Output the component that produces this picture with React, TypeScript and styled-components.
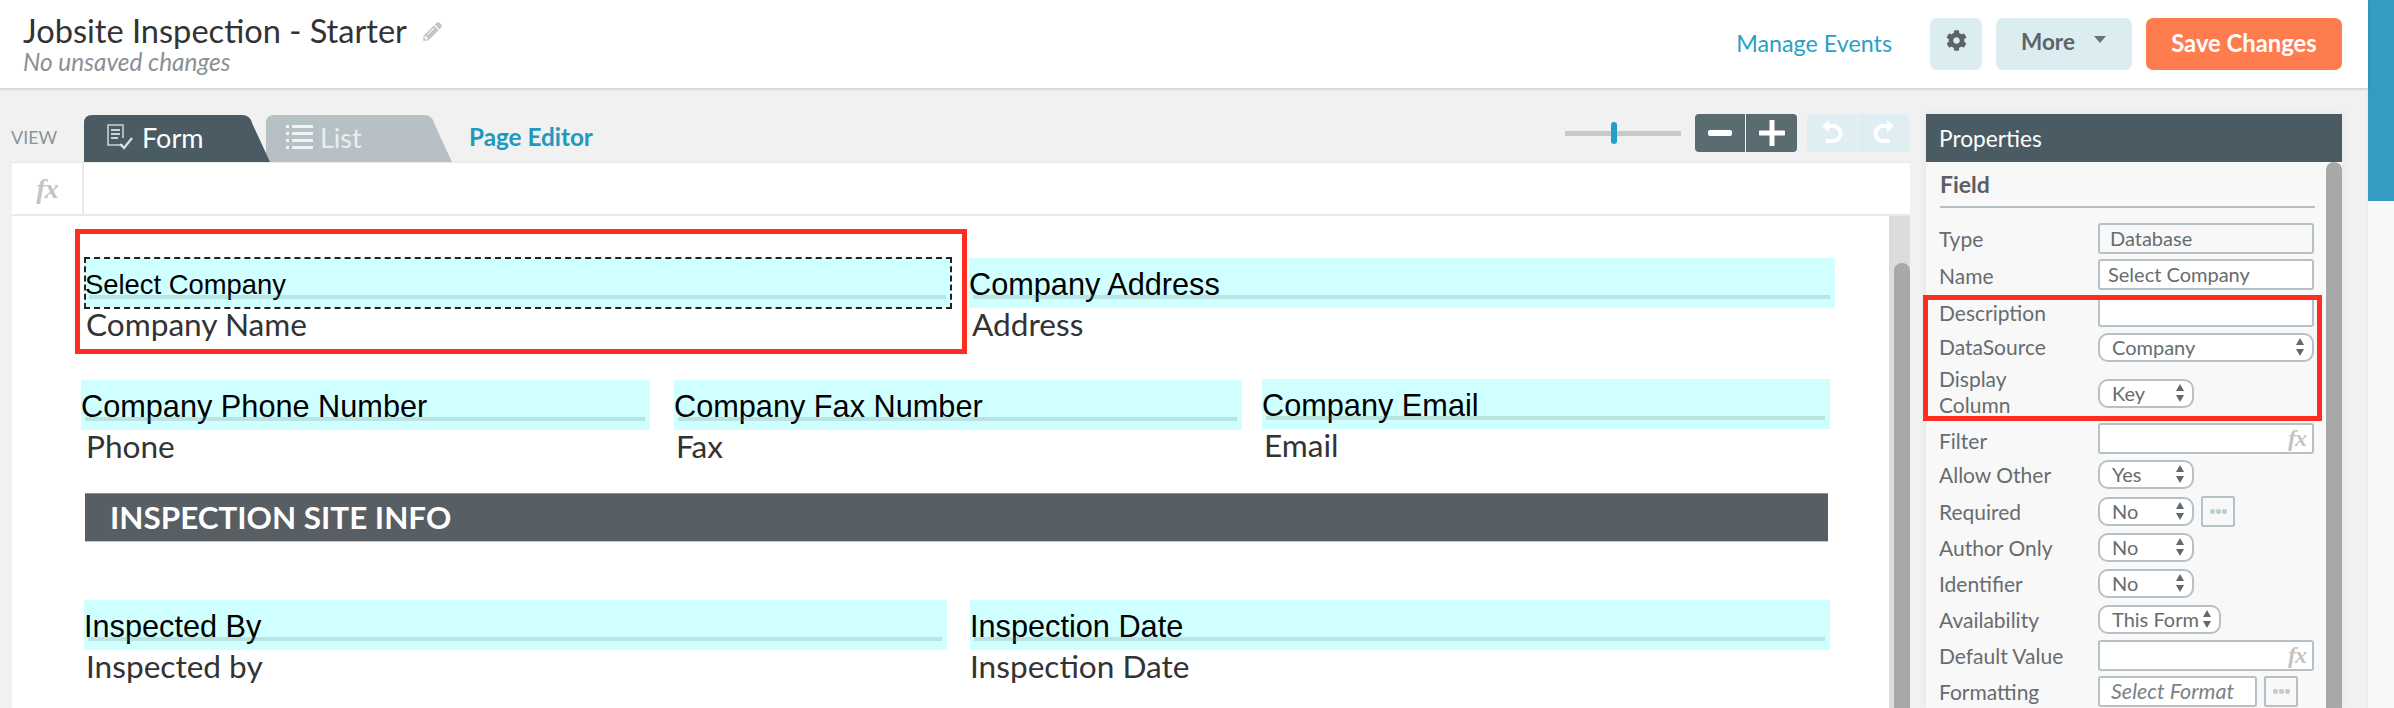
import React from "react";
import styled, { createGlobalStyle } from "styled-components";
import { FaCog, FaPencilAlt } from "react-icons/fa";

const GlobalStyle = createGlobalStyle`
  html, body { margin: 0; padding: 0; background: #f1f1f1; }
  * { box-sizing: border-box; }
`;
const sans = `"Lato", "Liberation Sans", sans-serif`;

const Page = styled.div`
  width: 2394px; height: 708px; overflow: hidden; display: flex; background: #f1f1f1;
  font-family: ${sans}; position: relative;
`;
const Main = styled.div`width: 2368px; display: flex; flex-direction: column; height: 708px;`;
const SideStrip = styled.div`
  width: 26px; height: 708px; background: #f8f8f8; box-shadow: -1px 0 2px rgba(0,0,0,.04);
`;
const StripFill = styled.div`height: 201px; background: #349cc0;`;

const TopBar = styled.header`
  height: 88px; flex: none; background: #fff; box-shadow: 0 1px 3px rgba(0,0,0,.18); display: flex;
  align-items: flex-start; padding: 18px 26px 0 23px; position: relative; z-index: 2;
`;
const TitleBlock = styled.div`display: flex; flex-direction: column; margin-top: -4px;`;
const TitleLine = styled.div`display: flex; align-items: center; gap: 16px; height: 34px;`;
const Title = styled.h1`margin: 0; font-size: 32.6px; font-weight: 400; color: #333; line-height: 34px; white-space: nowrap;`;
const PencilIcon = styled(FaPencilAlt)`color: #c2c6c8; font-size: 19px;`;
const Subtitle = styled.div`font-size: 24.4px; font-style: italic; color: #899196; line-height: 26px; margin-top: 1px; white-space: nowrap;`;
const TopActions = styled.div`margin-left: auto; display: flex; align-items: flex-start;`;
const EventsLink = styled.a`font-size: 23.3px; color: #2aa0c5; line-height: 50px; margin-right: 38px; white-space: nowrap;`;
const GearButton = styled.button`
  width: 52px; height: 52px; border: 0; border-radius: 7px; background: #dcedf2; color: #5c6468;
  font-size: 21px; display: flex; align-items: flex-start; justify-content: center; padding: 12px 0 0; margin-right: 14px;
`;
const MoreButton = styled.button`
  width: 136px; height: 52px; border: 0; border-radius: 7px; background: #dcedf2; color: #5c6468; font: 700 22.5px ${sans};
  display: flex; align-items: center; gap: 19px; padding: 0 0 6px 25px; margin-right: 14px;
`;
const Caret = styled.span`width: 0; height: 0; border: 6px solid transparent; border-top: 7px solid #6a7276; border-bottom: 0; margin-bottom: 3px;`;
const SaveButton = styled.button`
  width: 196px; height: 52px; border: 0; border-radius: 7px; background: #ff7c4f; color: #fff; font: 700 23.8px ${sans}; white-space: nowrap; padding: 0 0 2px;
`;

const Workspace = styled.div`flex: 1; min-height: 0; display: flex; padding: 26px 0 0 12px;`;
const EditorColumn = styled.div`width: 1898px; display: flex; flex-direction: column; min-height: 0;`;
const Toolbar = styled.div`height: 48px; flex: none; display: flex; align-items: flex-start; padding-right: 1px;`;
const ViewLabel = styled.span`width: 73px; margin-left: -1px; font-size: 18px; color: #8b9498; line-height: 46px; flex: none;`;
const TabShape = styled.div<{ $active?: boolean }>`
  width: 186px; height: 48px; flex: none; display: flex; align-items: center; padding-bottom: 2px;
  background: ${(p) => (p.$active ? "#4a5b64" : "#b7c0c5")};
  color: ${(p) => (p.$active ? "#fff" : "#e9eef0")};
  margin-left: ${(p) => (p.$active ? 0 : "-4px")};
  padding-left: ${(p) => (p.$active ? 21 : 20)}px; gap: ${(p) => (p.$active ? 9 : 6)}px; font-size: 27px; position: relative;
  z-index: ${(p) => (p.$active ? 1 : 0)};
  clip-path: path("M0 48 L0 9 Q0 1 8 1 L158 1 Q166 1 168 9 L186 48 Z");
`;
const PageEditor = styled.a`margin-left: 17px; color: #2298be; font-size: 24.3px; font-weight: 700; line-height: 46px; white-space: nowrap;`;
const ZoomArea = styled.div`margin-left: auto; display: flex; align-items: flex-start;`;
const SliderTrack = styled.div`width: 116px; height: 5px; margin: 17px 14px 0 0; background: #c9c9c9; position: relative;`;
const SliderThumb = styled.span`position: absolute; left: 46px; top: -9px; width: 6px; height: 22px; background: #219fc9; border-radius: 3px;`;
const ButtonPair = styled.div<{ $gap?: number }>`display: flex; gap: 1px; margin-left: ${(p) => p.$gap ?? 0}px;`;
const SquareButton = styled.button<{ $dim?: boolean; $side: "l" | "r" }>`
  width: ${(p) => (p.$side === "l" ? 50 : 51)}px; height: 38px; padding: 0; border: 0; display: flex; align-items: center; justify-content: center;
  background: ${(p) => (p.$dim ? "#dfeef3" : "#5b6b72")};
  border-radius: ${(p) => (p.$side === "l" ? "4px 0 0 4px" : "0 4px 4px 0")};
`;

const FxRow = styled.div`
  height: 54px; flex: none; display: flex; background: #fff; border-top: 1px solid #e8e8e8; border-bottom: 2px solid #e8e8e8;
`;
const FxCell = styled.div`width: 72px; border-right: 2px solid #eaeaea; display: flex; align-items: center; justify-content: center;`;
const FxGlyph = styled.span<{ $size?: number }>`
  font: italic 700 ${(p) => p.$size ?? 28}px "Liberation Serif", serif; color: #c4c4c4; letter-spacing: -1px;
`;

const CanvasRow = styled.div`flex: 1; min-height: 0; display: flex; background: #fff;`;
const FormArea = styled.div`width: 1877px; position: relative; padding-top: 42px; overflow: hidden;`;
const ScrollTrack = styled.div`width: 21px; background: #dcdcdc; padding: 47px 0 0 5px; overflow: hidden;`;
const ScrollThumb = styled.div`height: 600px; background: #a8a8a8; border-radius: 8px;`;

const FormRow = styled.div<{ $top?: number }>`display: flex; align-items: flex-start; margin-top: ${(p) => p.$top ?? 0}px;`;
const FieldBox = styled.div<{ $w: number; $ml: number; $raise?: number }>`
  width: ${(p) => p.$w}px; margin-left: ${(p) => p.$ml}px; flex: none; margin-top: ${(p) => -(p.$raise ?? 0)}px;
`;
const Band = styled.div<{ $dashed?: boolean; $size?: number }>`
  height: 50px; background: #d0ffff; display: flex; align-items: center; position: relative; padding-top: 3px;
  font: ${(p) => p.$size ?? 30.7}px "Liberation Sans", Arial, sans-serif; color: #000; white-space: nowrap;
  outline: ${(p) => (p.$dashed ? "2px dashed #222" : "none")}; outline-offset: -1px;
  &::after { content: ""; position: absolute; left: 4px; right: 5px; bottom: 9px; height: 4px; background: rgba(110,130,130,.22); }
`;
const FieldValue = styled.div<{ $x?: number }>`
  font-size: 31.6px; color: #333; line-height: 32px; padding-bottom: 2px; padding-left: ${(p) => p.$x ?? 2}px; white-space: nowrap;
`;
const SectionBar = styled.div`
  margin: 29px 0 0 73px; width: 1743px; height: 49px; background: #575e64; border-top: 1px solid #8a8f93; border-bottom: 1px solid #c4c6c8;
  color: #fff; font-size: 31.4px; font-weight: 700; line-height: 47px; padding-left: 25px; white-space: nowrap;
`;
const CompanyHighlight = styled.div`
  position: absolute; left: 63px; top: 13px; width: 892px; height: 125px; border: 5px solid #ff2d20; pointer-events: none;
`;

const Panel = styled.aside`
  width: 416px; margin-left: 16px; flex: none; display: flex; flex-direction: column; min-height: 0;
  box-shadow: 0 0 8px rgba(0,0,0,.06); position: relative;
`;
const PanelHeader = styled.div`height: 48px; flex: none; background: #4a5b64; color: #fff; font-size: 22.7px; line-height: 50px; padding-left: 13px;`;
const PanelBody = styled.div`flex: 1; min-height: 0; display: flex; background: #f8f8f8; overflow: hidden;`;
const PanelContent = styled.div`width: 400px; padding: 0 10px 0 13px; flex: none;`;
const PanelTitle = styled.div`
  height: 46px; border-bottom: 2px solid #b5c0c5; color: #5a6064; font-size: 23px; font-weight: 700; line-height: 44px; margin-bottom: 12px; margin-right: 1px; margin-left: 1px;
`;
const PanelScroll = styled.div`width: 16px; height: 100%; background: #a8a8a8; border-radius: 8px 8px 0 0;`;
const PropRow = styled.div<{ $h?: number }>`display: flex; align-items: center; height: ${(p) => p.$h ?? 36}px;`;
const PropLabel = styled.div<{ $shift?: number }>`
  width: 159px; flex: none; color: #666c70; font-size: 21px; line-height: 26px; padding-top: 1px; white-space: nowrap;
  transform: translateY(${(p) => p.$shift ?? 0}px);
`;
const TextBox = styled.div<{ $w?: number; $ro?: boolean; $italic?: boolean; $px?: number }>`
  width: ${(p) => p.$w ?? 216}px; height: 31px; border: 2px solid #b5c1c6; border-radius: 3px;
  background: ${(p) => (p.$ro ? "#f8f8f8" : "#fff")}; color: ${(p) => (p.$italic ? "#7c8286" : "#666c70")};
  font-size: ${(p) => (p.$italic ? 21.5 : 20)}px; font-style: ${(p) => (p.$italic ? "italic" : "normal")}; line-height: 26px; padding-left: ${(p) => p.$px ?? 10}px;
  position: relative; white-space: nowrap;
`;
const FxInBox = styled.span`position: absolute; right: 6px; top: 0; line-height: 24px; display: block;`;
const SelectBox = styled.div<{ $w?: number }>`
  width: ${(p) => p.$w ?? 96}px; height: 29px; border: 2px solid #b5c1c6; border-radius: 10px; background: #fff; color: #666c70;
  font-size: 20px; line-height: 24px; padding-left: 12px; position: relative; white-space: nowrap;
`;
const Stepper = styled.span`
  position: absolute; right: 8px; top: 3px; width: 9px; height: 18px; display: flex; flex-direction: column; justify-content: space-between; align-items: center;
  &::before, &::after { content: ""; width: 0; height: 0; border-left: 4.5px solid transparent; border-right: 4.5px solid transparent; }
  &::before { border-bottom: 7px solid #62686c; }
  &::after { border-top: 7px solid #62686c; }
`;
const DotsButton = styled.div`
  width: 34px; height: 31px; margin-left: 7px; border: 2px solid #b5c1c6; border-radius: 2px; display: flex; align-items: flex-start; justify-content: center; gap: 1px; padding-top: 11px;
`;
const Dot = styled.span`width: 5px; height: 5px; border-radius: 2px; background: #c3ccd0;`;
const PanelHighlight = styled.div`
  position: absolute; left: -3px; top: 181px; width: 399px; height: 126px; border: 5px solid #ff2d20; pointer-events: none;
`;

const FormTabIcon = () => (
  <svg width="28" height="28" viewBox="0 0 28 28" fill="none" stroke="#c9d2d6" strokeWidth="1.6">
    <path d="M18 22H3V2h15v13" />
    <path d="M6 7h9M6 11h9M6 15h7" strokeWidth="2" />
    <path d="M15 21l4 4 8-10" stroke="#d7dee1" strokeWidth="2.4" />
  </svg>
);
const ListTabIcon = () => (
  <svg width="28" height="26" viewBox="0 0 28 26" fill="#f0f3f4">
    <rect x="0" y="1" width="3" height="3" /><rect x="6" y="1" width="21" height="3" />
    <rect x="0" y="8" width="3" height="3" /><rect x="6" y="8" width="21" height="3" />
    <rect x="0" y="15" width="3" height="3" /><rect x="6" y="15" width="21" height="3" />
    <rect x="0" y="22" width="3" height="3" /><rect x="6" y="22" width="21" height="3" />
  </svg>
);
const MinusIcon = () => (
  <svg width="24" height="8" viewBox="0 0 24 8"><rect x="0" y="1" width="24" height="6" rx="2" fill="#fff" /></svg>
);
const PlusIcon = () => (
  <svg width="26" height="26" viewBox="0 0 26 26"><path d="M13 1v24M1 13h24" stroke="#fff" strokeWidth="5" strokeLinecap="round" /></svg>
);
const FlipBox = styled.svg<{ $flip?: boolean }>`transform: ${(p) => (p.$flip ? "scaleX(-1)" : "none")};`;
const UndoIcon = ({ flip }: { flip?: boolean }) => (
  <FlipBox $flip={flip} width="22" height="28" viewBox="0 0 22 28">
    <path d="M6 7h6a7 7 0 0 1 0 15H5" fill="none" stroke="#fff" strokeWidth="4" />
    <path d="M1 7l7-6v12z" fill="#fff" />
  </FlipBox>
);

type FieldProps = { w: number; ml: number; label: string; value: string; dashed?: boolean; x?: number; raise?: number; size?: number };
const Field = ({ w, ml, label, value, dashed, x, raise, size }: FieldProps) => (
  <FieldBox $w={w} $ml={ml} $raise={raise}>
    <Band $dashed={dashed} $size={size}>{label}</Band>
    <FieldValue $x={x}>{value}</FieldValue>
  </FieldBox>
);

export default function App() {
  return (
    <Page>
      <GlobalStyle />
      <Main>
        <TopBar>
          <TitleBlock>
            <TitleLine>
              <Title>Jobsite Inspection - Starter</Title>
              <PencilIcon />
            </TitleLine>
            <Subtitle>No unsaved changes</Subtitle>
          </TitleBlock>
          <TopActions>
            <EventsLink>Manage Events</EventsLink>
            <GearButton aria-label="Settings"><FaCog /></GearButton>
            <MoreButton>More <Caret /></MoreButton>
            <SaveButton>Save Changes</SaveButton>
          </TopActions>
        </TopBar>
        <Workspace>
          <EditorColumn>
            <Toolbar>
              <ViewLabel>VIEW</ViewLabel>
              <TabShape $active><FormTabIcon />Form</TabShape>
              <TabShape><ListTabIcon />List</TabShape>
              <PageEditor>Page Editor</PageEditor>
              <ZoomArea>
                <SliderTrack><SliderThumb /></SliderTrack>
                <ButtonPair>
                  <SquareButton $side="l"><MinusIcon /></SquareButton>
                  <SquareButton $side="r"><PlusIcon /></SquareButton>
                </ButtonPair>
                <ButtonPair $gap={10}>
                  <SquareButton $side="l" $dim><UndoIcon /></SquareButton>
                  <SquareButton $side="r" $dim><UndoIcon flip /></SquareButton>
                </ButtonPair>
              </ZoomArea>
            </Toolbar>
            <FxRow><FxCell><FxGlyph>fx</FxGlyph></FxCell></FxRow>
            <CanvasRow>
              <FormArea>
                <FormRow>
                  <Field w={866} ml={73} label="Select Company" value="Company Name" dashed x={1} size={27.4} />
                  <Field w={866} ml={18} label="Company Address" value="Address" x={3} />
                </FormRow>
                <FormRow $top={38}>
                  <Field w={569} ml={69} label="Company Phone Number" value="Phone" x={5} />
                  <Field w={568} ml={24} label="Company Fax Number" value="Fax" x={2} />
                  <Field w={568} ml={20} label="Company Email" value="Email" x={2} raise={1} />
                </FormRow>
                <SectionBar>INSPECTION SITE INFO</SectionBar>
                <FormRow $top={58}>
                  <Field w={863} ml={72} label="Inspected By" value="Inspected by" x={2} />
                  <Field w={860} ml={23} label="Inspection Date" value="Inspection Date" x={0} />
                </FormRow>
                <CompanyHighlight />
              </FormArea>
              <ScrollTrack><ScrollThumb /></ScrollTrack>
            </CanvasRow>
          </EditorColumn>
          <Panel>
            <PanelHeader>Properties</PanelHeader>
            <PanelBody>
              <PanelContent>
                <PanelTitle>Field</PanelTitle>
                <PropRow><PropLabel>Type</PropLabel><TextBox $ro>Database</TextBox></PropRow>
                <PropRow $h={37}><PropLabel $shift={1}>Name</PropLabel><TextBox $px={8}>Select Company</TextBox></PropRow>
                <PropRow><PropLabel $shift={1}>Description</PropLabel><TextBox /></PropRow>
                <PropRow $h={37}><PropLabel $shift={-1}>DataSource</PropLabel><SelectBox $w={216}>Company<Stepper /></SelectBox></PropRow>
                <PropRow $h={54}><PropLabel $shift={-2}>Display<br />Column</PropLabel><SelectBox>Key<Stepper /></SelectBox></PropRow>
                <PropRow><PropLabel $shift={2}>Filter</PropLabel><TextBox><FxInBox><FxGlyph $size={24}>fx</FxGlyph></FxInBox></TextBox></PropRow>
                <PropRow $h={37}><PropLabel>Allow Other</PropLabel><SelectBox>Yes<Stepper /></SelectBox></PropRow>
                <PropRow><PropLabel>Required</PropLabel><SelectBox>No<Stepper /></SelectBox><DotsButton><Dot /><Dot /><Dot /></DotsButton></PropRow>
                <PropRow><PropLabel>Author Only</PropLabel><SelectBox>No<Stepper /></SelectBox></PropRow>
                <PropRow><PropLabel>Identifier</PropLabel><SelectBox>No<Stepper /></SelectBox></PropRow>
                <PropRow><PropLabel>Availability</PropLabel><SelectBox $w={123}>This Form<Stepper /></SelectBox></PropRow>
                <PropRow><PropLabel>Default Value</PropLabel><TextBox><FxInBox><FxGlyph $size={24}>fx</FxGlyph></FxInBox></TextBox></PropRow>
                <PropRow><PropLabel>Formatting</PropLabel><TextBox $w={159} $italic $px={11}>Select Format</TextBox><DotsButton><Dot /><Dot /><Dot /></DotsButton></PropRow>
              </PanelContent>
              <PanelScroll />
            </PanelBody>
            <PanelHighlight />
          </Panel>
        </Workspace>
      </Main>
      <SideStrip><StripFill /></SideStrip>
    </Page>
  );
}
